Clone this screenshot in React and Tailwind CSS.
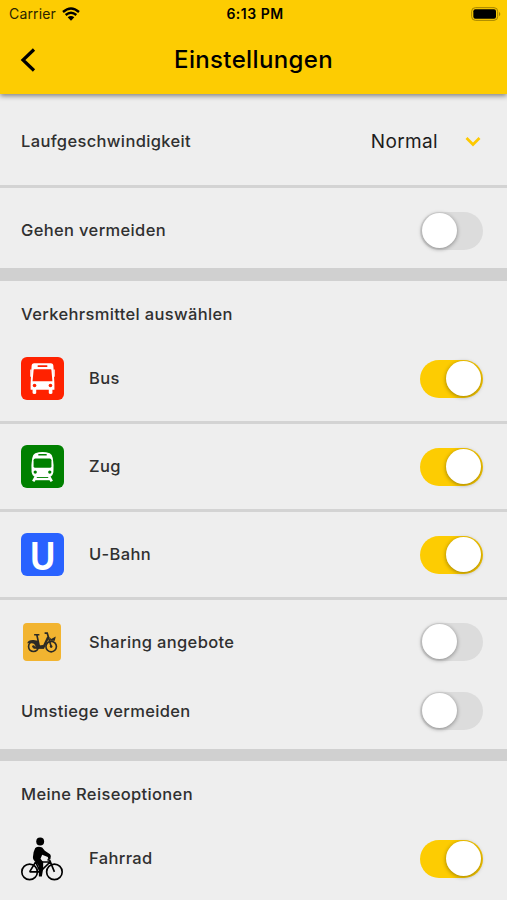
import { useState } from "react";

const BusIcon = () => (
  <svg viewBox="0 0 130 130" className="h-[43px] w-[43px]">
    <rect width="130" height="130" rx="18" fill="#ff2200" />
    <path
      d="M40 19H90Q98 19 98 28L101 80V99H95V109Q95 112 89.500 112Q84 112 84 109V99H46V109Q46 112 41 112Q35 112 35 109V99H29V80L32 28Q32 19 40 19Z"
      fill="#fff"
    />
    <path d="M30 38V60M100 38V60" stroke="#fff" strokeWidth="4" />
    <rect x="50" y="25" width="30" height="5" rx="2" fill="#ff2200" />
    <path d="M40 37H90Q92 37 92 40L95 73H35L38 40Q38 37 40 37Z" fill="#ff2200" />
    <circle cx="41" cy="86" r="5.500" fill="#ff2200" />
    <circle cx="89" cy="86" r="5.500" fill="#ff2200" />
  </svg>
);

const TrainIcon = () => (
  <svg viewBox="0 0 130 130" className="h-[43px] w-[43px]">
    <rect width="130" height="130" rx="18" fill="#008000" />
    <path
      d="M43 25Q65 17 87 25Q94 29 96 39Q100 60 98 82Q96 94 87 97H43Q34 94 32 82Q30 60 34 39Q36 29 43 25Z"
      fill="#fff"
    />
    <rect x="52" y="27" width="26" height="5" rx="2" fill="#008000" />
    <rect x="38" y="41" width="54" height="28" rx="5" fill="#008000" />
    <circle cx="43" cy="82" r="5" fill="#008000" />
    <circle cx="87" cy="82" r="5" fill="#008000" />
    <path d="M45 96L37 110M85 96L93 110" stroke="#fff" strokeWidth="8" />
    <path d="M40 103H90" stroke="#fff" strokeWidth="7" />
  </svg>
);

const SubwayIcon = () => (
  <div className="flex h-[43px] w-[43px] items-center justify-center rounded-md bg-[#2962ff] pt-[3px]">
    <span className="inline-block scale-x-[0.84] font-['Liberation_Sans',sans-serif] text-[41px] leading-[40px] font-bold tracking-normal text-white">
      U
    </span>
  </div>
);

const SharingIcon = () => (
  <svg viewBox="0 0 116 116" className="h-[38px] w-[38px]">
    <rect width="116" height="116" rx="12" fill="#f2b430" />
    <g fill="none" stroke="#2b2a25" strokeWidth="5">
      <circle cx="32" cy="72" r="15" />
      <circle cx="86" cy="72" r="16" />
      <path d="M66 31H74L86 72" />
      <path d="M42 35L50 72M34 36H50" />
      <path d="M32 75H62L77 43" strokeWidth="7" />
    </g>
    <circle cx="32" cy="72" r="4" fill="#2b2a25" />
    <circle cx="86" cy="72" r="4" fill="#2b2a25" />
    <path d="M13 62Q16 51 32 52L46 54L48 69L61 67L64 78H40Q38 62 26 62Z" fill="#2b2a25" />
    <path d="M80 42L86 49L100 41L97 54H84Z" fill="#2b2a25" />
  </svg>
);

const CyclistIcon = () => (
  <svg viewBox="0 0 130 132" className="h-[44px] w-[43px]">
    <circle cx="58" cy="13" r="12" fill="#000" />
    <g fill="none" stroke="#000" strokeWidth="5">
      <circle cx="26" cy="105" r="23.500" />
      <circle cx="101" cy="105" r="23.500" />
      <path d="M26 105L44 75H87M44 75L58 104L88 75M26 105H57M101 105L87 70L80 68" />
    </g>
    <path
      d="M43 33Q51 26 64 31L72 41L88 52Q93 58 89 66L83 68L81 60L64 53L59 65L67 75V96L63 119H54L54 89L46 76Q36 70 36 61Q37 43 43 33Z"
      fill="#000"
    />
  </svg>
);

const Toggle = ({ on, onClick, label }) => (
  <button
    type="button"
    role="switch"
    aria-checked={on}
    aria-label={label}
    onClick={onClick}
    className={`flex h-[38px] w-[63px] shrink-0 items-center rounded-full pr-[2px] pb-px pl-[1.5px] ${
      on ? "justify-end bg-[#fdcc02]" : "justify-start bg-[#dcdcdc]"
    }`}
  >
    <span className="h-[35px] w-[35px] rounded-full bg-white shadow-[0_1px_4px_rgba(0,0,0,0.4)]" />
  </button>
);

const Row = ({ icon, label, on, onToggle, className }) => (
  <div className={`flex items-center pr-6 pl-[21px] ${className}`}>
    {icon ? <div className="flex w-[68px] shrink-0">{icon}</div> : null}
    <span className="flex-1">{label}</span>
    <Toggle on={on} onClick={onToggle} label={label} />
  </div>
);

const Divider = () => <div className="h-[3px] bg-[#d3d3d3]" />;

export default function App() {
  const [settings, setSettings] = useState({
    walking: false,
    bus: true,
    train: true,
    subway: true,
    sharing: false,
    transfers: false,
    bike: true,
  });

  const bind = (key) => ({
    on: settings[key],
    onToggle: () => setSettings((prev) => ({ ...prev, [key]: !prev[key] })),
  });

  return (
    <div className="h-[900px] w-[507px] overflow-hidden bg-[#eeeeee] font-['Inter',sans-serif] text-[16.5px] font-medium tracking-[0.35px] text-[#303030]">
      <header className="relative h-[94px] bg-[#fdcc02] text-black shadow-[0_2px_5px_rgba(0,0,0,0.45)]">
        <div className="grid h-7 grid-cols-3 items-center pr-[6px] pl-[9px] text-[14px] leading-none tracking-normal">
          <div className="flex items-center gap-[6px] font-normal text-[#2b2400]">
            <span className="tracking-[0.15px]">Carrier</span>
            <svg viewBox="0 0 54 42" className="h-[14px] w-[18px]">
              <path d="M3 15Q27 -6 51 15M11 24Q27 10 43 24" fill="none" stroke="#000" strokeWidth="7" />
              <path d="M17 31Q27 23 37 31L27 41Z" fill="#000" />
            </svg>
          </div>
          <span className="text-center font-semibold tracking-[0.5px]">6:13 PM</span>
          <svg viewBox="0 0 90 42" className="h-[14px] w-[30px] justify-self-end">
            <rect x="2" y="2" width="78" height="38" rx="11" fill="none" stroke="#a38300" strokeWidth="3" />
            <rect x="7" y="7" width="68" height="28" rx="6" fill="#000" />
            <path d="M84 14Q92 21 84 28Z" fill="#a38300" />
          </svg>
        </div>
        <div className="grid h-[64px] grid-cols-[60px_1fr_60px] items-center">
          <button type="button" aria-label="Zurück" className="pl-5">
            <svg viewBox="0 0 16 26" className="h-[26px] w-4">
              <path d="M14 2.500L3 13L14 23.500" fill="none" stroke="#000" strokeWidth="3.200" />
            </svg>
          </button>
          <h1 className="text-center text-[24px] tracking-[0.35px]">Einstellungen</h1>
        </div>
      </header>

      <div className="flex h-[91px] items-center pt-1 pr-[26px] pl-[21px]">
        <span className="flex-1 pb-px">Laufgeschwindigkeit</span>
        <span className="pt-[2px] text-[19px] font-normal text-[#1c1c1c]">Normal</span>
        <svg viewBox="0 0 16 12" className="ml-[27px] h-3 w-4">
          <path d="M1.500 2L8 8.500L14.500 2" fill="none" stroke="#fdc900" strokeWidth="2.700" />
        </svg>
      </div>
      <Divider />
      <Row label="Gehen vermeiden" className="h-20 pt-[5px]" {...bind("walking")} />

      <div className="h-[13px] bg-[#d0d0d0]" />
      <h2 className="flex h-[66px] items-center pl-[21px]">Verkehrsmittel auswählen</h2>
      <Row icon={<BusIcon />} label="Bus" className="h-[74px] pb-[11px]" {...bind("bus")} />
      <Divider />
      <Row icon={<TrainIcon />} label="Zug" className="h-[85px]" {...bind("train")} />
      <Divider />
      <Row icon={<SubwayIcon />} label="U-Bahn" className="h-[85px]" {...bind("subway")} />
      <Divider />
      <Row
        icon={<div className="pl-[2px]"><SharingIcon /></div>}
        label="Sharing angebote"
        className="h-[84px]"
        {...bind("sharing")}
      />
      <Row label="Umstiege vermeiden" className="h-[65px] pb-[11px]" {...bind("transfers")} />

      <div className="h-3 bg-[#d0d0d0]" />
      <h2 className="flex h-[66px] items-center pl-[21px]">Meine Reiseoptionen</h2>
      <Row icon={<CyclistIcon />} label="Fahrrad" className="h-[63px]" {...bind("bike")} />
    </div>
  );
}
